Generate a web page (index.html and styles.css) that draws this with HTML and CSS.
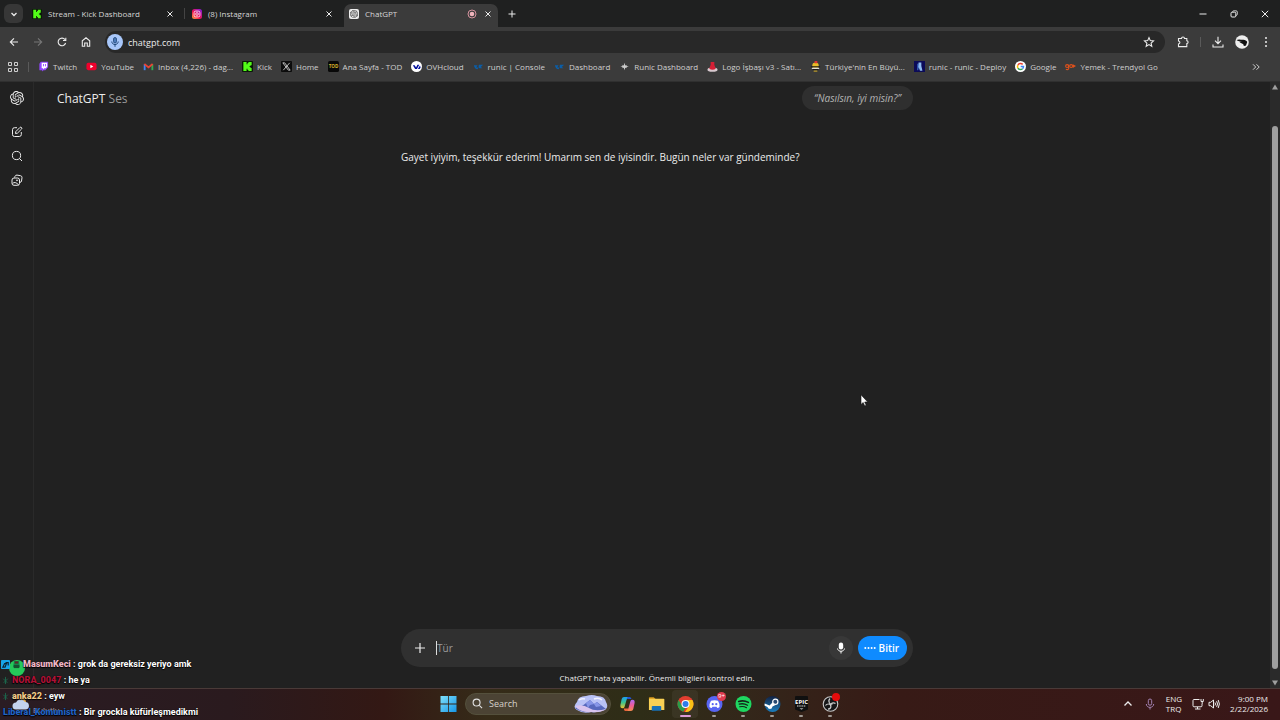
FILE: index.html
```html
<!DOCTYPE html>
<html lang="tr">
<head>
  <meta charset="UTF-8" />
  <meta name="viewport" content="width=device-width, initial-scale=1" />
  <title>ChatGPT</title>
  <link rel="stylesheet" href="styles.css">
</head>
<body>

<svg class="defs" aria-hidden="true">
  <symbol id="kick" viewBox="0 0 12 12"><rect width="12" height="12" rx="1" fill="#0b1a08"/><path d="M1.500 1h3.500v2.500h1V2.300h1V1h3.500v3.500H9.300v1h-1v1h1v1h1.200V11H7V9.700H6V8.500H5V11H1.500z" fill="#53fc18"/></symbol>
  <symbol id="close" viewBox="0 0 8 8"><path d="M1.500 1.500l5 5M6.500 1.500l-5 5" stroke="currentColor" stroke-width="1" fill="none"/></symbol>
  <symbol id="arrow-mark" viewBox="0 0 12 12"><path d="M1 4.500h4L3.500 7H6l-1 2C3 9 1.500 7.500 1 4.500zM6.500 4H11L8.500 6.500 10.500 8H7C6 7 5.800 5.500 6.500 4z" fill="#0b5ea8"/></symbol>
  <symbol id="openai" viewBox="0 0 24 24"><path fill="currentColor" d="M22.2819 9.8211a5.9847 5.9847 0 0 0-.5157-4.9108 6.0462 6.0462 0 0 0-6.5098-2.9A6.0651 6.0651 0 0 0 4.9807 4.1818a5.9847 5.9847 0 0 0-3.9977 2.9 6.0462 6.0462 0 0 0 .7427 7.0966 5.98 5.98 0 0 0 .511 4.9107 6.051 6.051 0 0 0 6.5146 2.9001A5.9847 5.9847 0 0 0 13.2599 24a6.0557 6.0557 0 0 0 5.7718-4.2058 5.9894 5.9894 0 0 0 3.9977-2.9001 6.0557 6.0557 0 0 0-.7475-7.0729zm-9.022 12.6081a4.4755 4.4755 0 0 1-2.8764-1.0408l.1419-.0804 4.7783-2.7582a.7948.7948 0 0 0 .3927-.6813v-6.7369l2.02 1.1686a.071.071 0 0 1 .038.052v5.5826a4.504 4.504 0 0 1-4.4945 4.4944zm-9.6607-4.1254a4.4708 4.4708 0 0 1-.5346-3.0137l.142.0852 4.783 2.7582a.7712.7712 0 0 0 .7806 0l5.8428-3.3685v2.3324a.0804.0804 0 0 1-.0332.0615L9.74 19.9502a4.4992 4.4992 0 0 1-6.1408-1.6464zM2.3408 7.8956a4.485 4.485 0 0 1 2.3655-1.9728V11.6a.7664.7664 0 0 0 .3879.6765l5.8144 3.3543-2.0201 1.1685a.0757.0757 0 0 1-.071 0l-4.8303-2.7865A4.504 4.504 0 0 1 2.3408 7.872zm16.5963 3.8558L13.1038 8.364 15.1192 7.2a.0757.0757 0 0 1 .071 0l4.8303 2.7913a4.4944 4.4944 0 0 1-.6765 8.1042v-5.6772a.79.79 0 0 0-.407-.667zm2.0107-3.0231l-.142-.0852-4.7735-2.7818a.7759.7759 0 0 0-.7854 0L9.409 9.2297V6.8974a.0662.0662 0 0 1 .0284-.0615l4.8303-2.7866a4.4992 4.4992 0 0 1 6.6802 4.66zM8.3065 12.863l-2.02-1.1638a.0804.0804 0 0 1-.038-.0567V6.0742a4.4992 4.4992 0 0 1 7.3757-3.4537l-.142.0805L8.704 5.459a.7948.7948 0 0 0-.3927.6813zm1.0976-2.3654l2.602-1.4998 2.6069 1.4998v2.9994l-2.5974 1.4997-2.6067-1.4997Z"/></symbol>
</svg>

<div class="tab-strip">
  <button class="tab-search" aria-label="Search tabs"><svg viewBox="0 0 12 12"><path d="M3.500 5L6 7.500 8.500 5" stroke="currentColor" stroke-width="1.300" fill="none"/></svg></button>
  <div class="tab">
    <svg class="favicon"><use href="#kick"/></svg>
    <span class="tab-title">Stream - Kick Dashboard</span>
    <button class="tab-close" aria-label="Close tab"><svg><use href="#close"/></svg></button>
  </div>
  <div class="tab tab-divided">
    <svg class="favicon" viewBox="0 0 12 12"><defs><linearGradient id="insta" x1="0" y1="1" x2="1" y2="0"><stop offset="0" stop-color="#ffb03d"/><stop offset=".4" stop-color="#f4134d"/><stop offset="1" stop-color="#7a1be8"/></linearGradient></defs><rect width="12" height="12" rx="3" fill="url(#insta)"/><rect x="2.500" y="2.500" width="7" height="7" rx="2" fill="none" stroke="#fff" stroke-width=".9"/><circle cx="6" cy="6" r="1.600" fill="none" stroke="#fff" stroke-width=".9"/></svg>
    <span class="tab-title">(8) Instagram</span>
    <button class="tab-close" aria-label="Close tab"><svg><use href="#close"/></svg></button>
  </div>
  <div class="tab active">
    <svg class="favicon gpt-favicon"><use href="#openai"/></svg>
    <span class="tab-title">ChatGPT</span>
    <svg class="recording" viewBox="0 0 10 10"><circle cx="5" cy="5" r="4" fill="none" stroke="#d5929e"/><circle cx="5" cy="5" r="2.300" fill="#f0b4bc"/></svg>
    <button class="tab-close" aria-label="Close tab"><svg><use href="#close"/></svg></button>
  </div>
  <button class="new-tab" aria-label="New tab"><svg viewBox="0 0 8 8"><path d="M4 .5v7M.5 4h7" stroke="currentColor"/></svg></button>
  <div class="window-buttons">
    <button aria-label="Minimize"><svg viewBox="0 0 10 10"><path d="M1.500 5h7" stroke="currentColor"/></svg></button>
    <button aria-label="Restore"><svg viewBox="0 0 10 10"><rect x="2" y="3.200" width="4.800" height="4.800" rx="1" fill="none" stroke="currentColor"/><path d="M3.700 3V2.600Q3.700 1.800 4.700 1.800H7Q8.300 1.800 8.300 3v2.400Q8.300 6.300 7 6.400" fill="none" stroke="currentColor" stroke-width=".8"/></svg></button>
    <button aria-label="Close"><svg viewBox="0 0 10 10"><path d="M1.800 1.800l6.400 6.400M8.200 1.800L1.800 8.200" stroke="currentColor"/></svg></button>
  </div>
</div>

<div class="toolbar">
  <div class="nav-buttons">
    <button aria-label="Back"><svg viewBox="0 0 12 12"><path d="M10 6H2.500M6 2.300L2.300 6 6 9.700" /></svg></button>
    <button class="dim" aria-label="Forward"><svg viewBox="0 0 12 12"><path d="M2 6h7.500M6 2.300L9.700 6 6 9.700" /></svg></button>
    <button aria-label="Reload"><svg viewBox="0 0 12 12"><path d="M9.600 7A3.800 3.800 0 1 1 9 3.600M9.800 1.700v2.800H7" /></svg></button>
    <button aria-label="Home"><svg viewBox="0 0 12 12"><path d="M2.300 10.300V4.800L6 1.800l3.700 3v5.500H7.300V7H4.700v3.300z" /></svg></button>
  </div>
  <div class="address-bar">
    <span class="mic-badge"><svg viewBox="0 0 12 12"><rect x="4.500" y="1.500" width="3" height="5.500" rx="1.500" fill="#4b79b8" stroke="#1f4678" stroke-width=".8"/><path d="M2.800 5.500c0 4 6.400 4 6.400 0M6 8.500v2.300" fill="none" stroke="#1f4678" stroke-width="1"/></svg></span>
    <input type="text" value="chatgpt.com" aria-label="Address">
    <button aria-label="Bookmark"><svg viewBox="0 0 12 12"><path d="M6 1.600l1.300 3 3.200.3-2.400 2.200.7 3.200L6 8.600l-2.800 1.700.7-3.200L1.500 4.900l3.200-.3z" /></svg></button>
  </div>
  <div class="tool-buttons">
    <button aria-label="Extensions"><svg viewBox="0 0 12 12"><path d="M1.500 2.500h3Q4.500 1 6 1t1.500 1.500h2.300v2.300q1.300.2 1.300 1.400T9.800 7.600v3H1.500V8q1.400-.3 1.400-1.500T1.500 5z" /></svg></button>
    <span class="tool-divider"></span>
    <button aria-label="Downloads"><svg viewBox="0 0 12 12"><path d="M6 .8v6.500M3 4.600l3 3 3-3M1 8.500v2.500h10V8.500" /></svg></button>
    <button aria-label="Profile"><svg class="avatar" viewBox="0 0 14 14"><circle cx="7" cy="7" r="6.800" fill="#eee"/><path d="M1.500 5C4 3.800 6 4.800 7.500 4.800 10 4.500 11.500 5.500 12.200 7L11 10.500c-1.300.8-3 .3-2.600-1.200L4.500 7.300 7 6.800C5 6.800 3 6.200 1.500 5z" fill="#111"/></svg></button>
    <button aria-label="Menu"><svg viewBox="0 0 12 12"><g fill="currentColor" stroke="none"><circle cx="6" cy="2" r="1"/><circle cx="6" cy="6" r="1"/><circle cx="6" cy="10" r="1"/></g></svg></button>
  </div>
</div>

<nav class="bookmarks">
  <button class="apps" aria-label="Apps"><svg viewBox="0 0 10 10"><path d="M.5.5h3v3h-3zM6.500.5h3v3h-3zM.5 6.500h3v3h-3zM6.500 6.500h3v3h-3z" fill="none" stroke="currentColor"/></svg></button>
  <div class="bookmark-list">
    <a href="#"><svg viewBox="0 0 12 12"><path d="M3 .8h8v6L8 10H6l-1.500 1.500V10H1.500V3z" fill="#9146ff"/><path d="M4 1.800h6v4.500L8.500 8H6.800L5.500 9.200V8H4z" fill="#fff"/><path d="M6 3.300v2.500M8.200 3.300v2.500" stroke="#9146ff"/></svg><span>Twitch</span></a>
    <a href="#"><svg viewBox="0 0 12 12"><rect x=".5" y="2" width="11" height="8" rx="2" fill="#f0002c"/><path d="M4.800 4v4L8 6z" fill="#fff"/></svg><span>YouTube</span></a>
    <a href="#"><svg viewBox="0 0 12 12"><path d="M1.800 10V3.500" stroke="#4285f4" stroke-width="2"/><path d="M10.200 10V3.500" stroke="#34a853" stroke-width="2"/><path d="M1.500 3.300L6 7l4.500-3.700" fill="none" stroke="#ea4335" stroke-width="2"/></svg><span>Inbox (4,226) - dag...</span></a>
    <a href="#"><svg><use href="#kick"/></svg><span>Kick</span></a>
    <a href="#"><svg viewBox="0 0 12 12"><rect width="12" height="12" rx="1" fill="#0c0c0c"/><path d="M2 2h2l6 8H8zM9.500 2L2.500 10" fill="none" stroke="#ddd" stroke-width=".9"/></svg><span>Home</span></a>
    <a href="#"><svg viewBox="0 0 12 12"><rect width="12" height="12" rx="2" fill="#080808"/><text x="6" y="8" font-size="5" font-weight="700" text-anchor="middle" fill="#d8b42d">TOD</text></svg><span>Ana Sayfa - TOD</span></a>
    <a href="#"><svg viewBox="0 0 12 12"><circle cx="6" cy="6" r="6" fill="#fff"/><path d="M2 4.500h2L5.500 7 7 4h2L6.500 8.800h-2zM8.500 7l1.300-2 .7 2-1 1.800h-2z" fill="#000e9c"/></svg><span>OVHcloud</span></a>
    <a href="#"><svg><use href="#arrow-mark"/></svg><span>runic | Console</span></a>
    <a href="#"><svg><use href="#arrow-mark"/></svg><span>Dashboard</span></a>
    <a href="#"><svg viewBox="0 0 12 12"><path d="M6 2l.8 2.800L9 4 7.800 5.400l3 .6-3 .7L9 8l-2.200-.7L6 10l-.8-2.700L3 8l1.200-1.300L1.500 6l2.700-.6L3 4l2.200.8z" fill="#ccc"/></svg><span>Runic Dashboard</span></a>
    <a href="#"><svg viewBox="0 0 12 12"><ellipse cx="6" cy="9.500" rx="5.500" ry="2.300" fill="#d8c9cf"/><path d="M4 1h4v3l1.500 4.500Q6 10.500 2.500 8.500L4 4z" fill="#d51f35"/></svg><span>Logo İşbaşı v3 - Satı...</span></a>
    <a href="#"><svg viewBox="0 0 12 12"><circle cx="6" cy="5" r="3.500" fill="#e8bd27"/><path d="M5 0h3v2.500H5z" fill="#d33"/><path d="M1 6.500h10M3 9.500h6" stroke="#181818" stroke-width="1.400"/><path d="M2 8h8" stroke="#eee" stroke-width="1.200"/><path d="M4 11h4" stroke="#e8bd27"/></svg><span>Türkiye'nin En Büyü...</span></a>
    <a href="#"><svg viewBox="0 0 12 12"><rect width="12" height="12" fill="#0c0b57"/><path d="M5 1.500h3v4l1.200 5H6.500L5 6.500l-1 4" fill="#8dbbf0"/><path d="M4.200 3v7" stroke="#3c79db"/></svg><span>runic - runic - Deploy</span></a>
    <a href="#"><svg viewBox="0 0 12 12"><circle cx="6" cy="6" r="6" fill="#fff"/><g fill="none" stroke-width="1.600"><path d="M8.400 3.700A3.300 3.300 0 0 0 3.200 4.400" stroke="#ea4335"/><path d="M3.200 4.400a3.300 3.300 0 0 0 0 3.300" stroke="#fbbc05"/><path d="M3.200 7.700a3.300 3.300 0 0 0 5 .8" stroke="#34a853"/><path d="M8.200 8.500A3.300 3.300 0 0 0 9.300 6H6.200" stroke="#4285f4"/></g></svg><span>Google</span></a>
    <a href="#"><svg viewBox="0 0 12 12"><g fill="none" stroke="#e0511b" stroke-width="1.200"><circle cx="2.300" cy="5.500" r="1.600"/><path d="M4 4v4.500q-1.500 1.500-3 .3"/><circle cx="6.700" cy="5.500" r="1.600"/></g><path d="M8.500 3.500L12 5.500 8.500 7.500z" fill="#e0511b"/></svg><span>Yemek - Trendyol Go</span></a>
  </div>
  <button class="more-bookmarks" aria-label="More bookmarks"><svg viewBox="0 0 10 10"><path d="M2 2.300L4.700 5 2 7.700M5.500 2.300L8.200 5 5.500 7.700" fill="none" stroke="currentColor"/></svg></button>
</nav>

<div class="page">
  <aside class="sidebar">
    <a href="#" class="home-link" aria-label="ChatGPT"><svg><use href="#openai"/></svg></a>
    <button aria-label="Yeni sohbet"><svg viewBox="0 0 12 12"><path d="M6 1.700H3.500Q1.500 1.700 1.500 3.700v4.800q0 2 2 2h4.800q2 0 2-2V6M4.500 7.500l.3-1.900L9 1.400q.8-.6 1.500.1t.1 1.500L6.400 7.200z"/></svg></button>
    <button aria-label="Ara"><svg viewBox="0 0 12 12"><circle cx="5.500" cy="5.500" r="4.100"/><path d="M8.500 8.500l2.500 2.500"/></svg></button>
    <button aria-label="Kitaplık"><svg viewBox="0 0 12 12"><rect x="1" y="4" width="7.500" height="7.300" rx="2"/><path d="M3.500 3.500L4 2.300Q4.600.9 6 1.100l3.500.6q1.700.4 1.500 2L10.500 7q-.3 1.300-1.500 1.400M1.500 9.500Q4 7 7.500 10.800"/><circle cx="6" cy="6.300" r=".5"/></svg></button>
  </aside>

  <main class="chat">
    <h1 class="model-name">ChatGPT <span>Ses</span></h1>
    <div class="thread">
      <p class="user-message">“Nasılsın, iyi misin?”</p>
      <p class="reply">Gayet iyiyim, teşekkür ederim! Umarım sen de iyisindir. Bugün neler var gündeminde?</p>
    </div>
    <form class="composer">
      <button type="button" class="attach" aria-label="Ekle"><svg viewBox="0 0 12 12"><path d="M6 1v10M1 6h10" stroke="currentColor" stroke-width="1.200"/></svg></button>
      <input type="text" placeholder="Tür" aria-label="Mesaj">
      <button type="button" class="mic" aria-label="Mikrofon"><svg viewBox="0 0 12 12"><rect x="3.800" y=".5" width="4.400" height="7" rx="2.200" fill="#fff"/><path d="M2.500 6.500c.5 3.700 6.500 3.700 7 0M6 9.300v2.200" fill="none" stroke="#fff"/></svg></button>
      <button type="button" class="end-voice"><svg viewBox="0 0 12 4"><g fill="#fff"><circle cx="1.300" cy="2" r="1"/><circle cx="4.500" cy="2" r="1"/><circle cx="7.600" cy="2" r="1"/><circle cx="10.700" cy="2" r="1"/></g></svg>Bitir</button>
    </form>
    <p class="disclaimer">ChatGPT hata yapabilir. Önemli bilgileri kontrol edin.</p>
  </main>

  <div class="scrollbar">
    <svg viewBox="0 0 8 6"><path d="M4 .5L7 5.500H1z" fill="#9f9f9f"/></svg>
    <div class="scroll-thumb"></div>
    <svg viewBox="0 0 8 6"><path d="M4 5.500L7 .5H1z" fill="#9f9f9f"/></svg>
  </div>

  <span class="user-avatar"></span>
  <svg class="cursor" viewBox="0 0 8 13"><path d="M1 .8v9.700l2.200-2 1.500 3.500 1.500-.7-1.500-3.300h3z" fill="#fff" stroke="#111" stroke-width=".6"/></svg>
</div>

<footer class="taskbar">
  <div class="weather">
    <svg viewBox="0 0 18 12"><circle cx="11" cy="4" r="3" fill="#e8b04b"/><path d="M4 11.500a3.500 3.500 0 0 1 0-7A5 5 0 0 1 13 4a3.800 3.800 0 0 1 1 7.500z" fill="#c3d2ef"/></svg>
    <span>Bulutlu</span>
  </div>
  <div class="task-icons">
    <button class="task start" aria-label="Start"><svg viewBox="0 0 16 16"><defs><linearGradient id="win" x1="0" y1="0" x2="1" y2="1"><stop offset="0" stop-color="#7fe0fb"/><stop offset="1" stop-color="#1695e6"/></linearGradient></defs><path d="M0 0h7.600v7.600H0zM8.400 0H16v7.600H8.400zM0 8.400h7.600V16H0zM8.400 8.400H16V16H8.400z" fill="url(#win)"/></svg></button>
    <label class="search">
      <svg class="lens" viewBox="0 0 12 12"><circle cx="5" cy="5" r="3.800"/><path d="M8 8l3 3"/></svg>
      <input type="text" placeholder="Search" aria-label="Search">
      <svg class="art" viewBox="0 0 34 18"><path d="M3 7Q4 1 12 1q6-2 11 0 8 0 9 6 3 5-1 8-8 3-14 2-8 2-14-2-5-3 0-8z" fill="#b9c2f6"/><path d="M1 13Q8 12 12 8l4-3 4 4 3-2 9 7q-7 4-15 3-10 1-16-4z" fill="#5768bd"/><path d="M12 8l4-3 4 4-4 1-2 3zM20 9l3-2 4 4-5 1z" fill="#8796e8"/><path d="M1 11q8-2 14 2t17 1q-6 4-14 3-12 1-17-6z" fill="#d9c4ee"/><path d="M5 5q3-2 6-1M20 4q5-2 8 1" stroke="#f2f3ff" stroke-width="1.500" fill="none"/></svg>
    </label>
    <button class="task" aria-label="Copilot"><svg viewBox="0 0 16 16"><defs><linearGradient id="cp1" x1="0" y1="0" x2="0" y2="1"><stop offset="0" stop-color="#199ff2"/><stop offset=".5" stop-color="#3fc58b"/><stop offset="1" stop-color="#f2c42f"/></linearGradient><linearGradient id="cp2" x1="0" y1="0" x2="0" y2="1"><stop offset="0" stop-color="#a86bf5"/><stop offset=".5" stop-color="#ed5b9a"/><stop offset="1" stop-color="#f38a4b"/></linearGradient></defs><path d="M4.500 1H9Q7.500 2 7 4L5 11q-.4 1.300-2 1.300Q.5 12.300.9 9l1.300-6Q2.700 1 4.500 1z" fill="url(#cp1)"/><path d="M9 1h1q1.500 0 2 2H7.200Q7.700 1 9 1z" fill="#2254d6"/><path d="M11.500 15H7q1.500-1 2-3l2-7q.4-1.300 2-1.300 2.500 0 2.100 3.300l-1.300 6q-.5 2-2.300 2z" fill="url(#cp2)"/><path d="M7 15H6q-1.500 0-1.800-2.500H9Q8.500 15 7 15z" fill="#f0673c"/></svg></button>
    <button class="task" aria-label="File Explorer"><svg viewBox="0 0 18 16"><path d="M1 1.500Q1 .8 1.800.8H6l2 2H1z" fill="#d99a1d"/><path d="M1 2.500h15.500q.8 0 .8.800v11H1z" fill="#f9d155"/><path d="M4 15.200V11q0-1 1-1h8q1 0 1 1v4.200z" fill="#1972b8"/></svg></button>
    <button class="task running focused" aria-label="Chrome"><svg viewBox="0 0 16 16"><circle cx="8" cy="8" r="8" fill="#e33e30"/><path d="M1.100 4L5 10.500l3 1.500-2.200 3.700A8 8 0 0 1 1.100 4z" fill="#2a9d49"/><path d="M8 4h6.900A8 8 0 0 1 7.500 16L11.500 10z" fill="#fbc116"/><circle cx="8" cy="8" r="4" fill="#fff"/><circle cx="8" cy="8" r="3" fill="#2e7de9"/></svg></button>
    <button class="task running" aria-label="Discord"><svg viewBox="0 0 16 16"><circle cx="8" cy="8" r="8" fill="#5865f2"/><path d="M4.500 4.800Q8 3.500 11.500 4.800 13.500 8 13 11q-1 1-2.200 1l-.8-1.300H6L5.200 12Q4 12 3 11 2.500 8 4.500 4.800z" fill="#fff"/><circle cx="6.200" cy="8.200" r="1.100" fill="#5865f2"/><circle cx="9.800" cy="8.200" r="1.100" fill="#5865f2"/></svg><span class="badge">9+</span></button>
    <button class="task running" aria-label="Spotify"><svg viewBox="0 0 16 16"><circle cx="8" cy="8" r="8" fill="#1ed760"/><g fill="none" stroke="#14251a" stroke-linecap="round"><path d="M3.200 5.400q5-1.500 9.700 1" stroke-width="1.600"/><path d="M3.700 8.200q4.300-1.200 8.300 1" stroke-width="1.300"/><path d="M4.200 10.800q3.800-1 6.800.9" stroke-width="1.100"/></g></svg></button>
    <button class="task running" aria-label="Steam"><svg viewBox="0 0 16 16"><defs><linearGradient id="steam" x1="0" y1="0" x2="0" y2="1"><stop offset="0" stop-color="#13203f"/><stop offset="1" stop-color="#1a7fc0"/></linearGradient></defs><circle cx="8" cy="8" r="8" fill="url(#steam)"/><path d="M.2 7.500L5 9.500 8 6.500l3 2.500-3 1.500q-.5 2.500-2.500 2.500T3 11L0 9.500z" fill="#fff"/><circle cx="10.800" cy="5.800" r="2.600" fill="#274a72" stroke="#fff" stroke-width="1.200"/></svg></button>
    <button class="task running" aria-label="Epic Games"><svg viewBox="0 0 16 16"><path d="M1.500 1Q1.500 0 2.500 0h11q1 0 1 1v12.500L8 16l-6.500-2.500z" fill="#101010"/><text x="8" y="7.500" font-size="6" font-weight="700" text-anchor="middle" fill="#fff">EPIC</text><path d="M3.500 10h9" stroke="#ddd" stroke-width="1.200" stroke-dasharray="1.500 .7"/><path d="M6 12.500h4l-2 1z" fill="#fff"/></svg></button>
    <button class="task running" aria-label="OBS"><svg viewBox="0 0 16 16"><circle cx="8" cy="8" r="7.300" fill="#161618" stroke="#c9c9c9" stroke-width="1.100"/><path d="M7.500 2.500q-2 2-.5 4.500 1 1.500 3 1M13 7.500q-2.500-1.500-4.500.5-1 1.500 0 3M5.500 13.200q3-.3 3-3.200-.5-2-2.500-2-2 0-3 1.500" fill="none" stroke="#c9c9c9" stroke-width="1.200"/></svg><span class="rec-dot"></span></button>
  </div>
  <div class="tray">
    <button aria-label="Hidden icons"><svg viewBox="0 0 12 12"><path d="M2.500 7.500L6 4l3.500 3.500" stroke-width="1.300"/></svg></button>
    <button class="tray-mic" aria-label="Microphone"><svg viewBox="0 0 12 12"><rect x="4.300" y="1" width="3.400" height="6.200" rx="1.700"/><path d="M2.300 6c0 4.500 7.400 4.500 7.400 0M6 9.500v2"/></svg></button>
    <span class="language">ENG<br>TRQ</span>
    <button class="status" aria-label="Network and volume">
      <svg viewBox="0 0 12 12"><path d="M7.500 1.500H2Q1 1.500 1 2.500v5.300q0 1 1 1h7q1 0 1-1V6M3 11h5.500M5.500 9v2M9 1v2.500h2.300V1M10.200 3.500V6"/></svg>
      <svg viewBox="0 0 12 12"><path d="M1 4.300h1.700L5.500 2v8L2.700 7.700H1zM7 4.500q1 1.500 0 3M8.600 3.200q1.900 2.800 0 5.600M10.200 2q2.400 4 0 8"/></svg>
    </button>
    <time class="clock">9:00 PM<br>2/22/2026</time>
  </div>
</footer>

<!-- stream chat overlay -->
<ul class="stream-chat">
  <li><svg viewBox="0 0 10 10"><rect width="10" height="10" rx="1" fill="#18a5e8"/><path d="M2 8l2-4h2L4.500 8zM5 3h3v3" fill="none" stroke="#0c2434" stroke-width="1.300"/></svg><svg viewBox="0 0 10 10"><path d="M2 1h6v2l1 5H1l1-5z" fill="#15884c"/><path d="M3 1.500h4V4H3z" fill="#5b2a2b"/><path d="M2 5.500h6V9H2z" fill="#14522e"/></svg><b class="pink">MasumKeci</b> : grok da gereksiz yeriyo amk</li>
  <li><svg viewBox="0 0 10 10"><path d="M5 1v8M2.500 3L7 7.500M7.500 3L3 7.500" stroke="#1c6a4e"/></svg><b class="red">NORA_0047</b> : he ya</li>
  <li><svg viewBox="0 0 10 10"><path d="M5 1v8M2.500 3L7 7.500M7.500 3L3 7.500" stroke="#1c6a4e"/></svg><b class="sand">anka22</b> : eyw</li>
  <li><b class="blue">Liberal_Komunistt</b> : Bir grockla küfürleşmedikmi</li>
</ul>

</body>
</html>
```
FILE: styles.css
```css
* {
  margin: 0;
  padding: 0;
  box-sizing: border-box;
}

body {
  display: flex;
  flex-direction: column;
  height: 100vh;
  overflow: hidden;
  font-family: "Segoe UI", "Open Sans", "Noto Sans", sans-serif;
  font-size: 8px;
  color: #ececec;
  background-color: #212121;
}

button, input {
  font: inherit;
  color: inherit;
  background: none;
  border: none;
  outline: none;
}

button {
  display: flex;
  align-items: center;
  justify-content: center;
}

a {
  color: inherit;
  text-decoration: none;
}

svg {
  display: block;
  flex-shrink: 0;
}

.defs {
  position: absolute;
  width: 0;
  height: 0;
}

/* tabs */
.tab-strip {
  display: flex;
  height: 27px;
  padding: 4px 5px 0 4px;
  background-color: #1f2020;
}

.tab-search {
  width: 19px;
  height: 19px;
  margin-right: 2px;
  border-radius: 6px;
  background-color: #373737;
}

.tab-search svg {
  width: 12px;
  height: 12px;
}

.tab {
  display: flex;
  align-items: center;
  width: 159px;
  height: 19px;
  padding: 0 10px 0 7px;
}

.tab-divided {
  border-left: 1px solid #444;
  height: 11px;
  margin-top: 4px;
}

.tab.active {
  width: 154px;
  height: 23px;
  padding: 0 6px 4px 5px;
  background-color: #3b3b3b;
  border-radius: 7px 7px 0 0;
  margin-left: 1px;
}

.favicon {
  width: 10px;
  height: 10px;
  margin-right: 6px;
}

.gpt-favicon {
  padding: 1px;
  border-radius: 2px;
  background-color: #eee;
  color: #333;
}

.tab-title {
  flex: 1;
  color: #d6d6d6;
}

.recording {
  width: 10px;
  height: 10px;
  margin-right: 7px;
}

.tab-close svg,
.new-tab svg {
  width: 8px;
  height: 8px;
}

.new-tab {
  width: 28px;
  height: 19px;
}

.window-buttons {
  display: flex;
  gap: 11px;
  height: 19px;
  margin-left: auto;
}

.window-buttons button {
  width: 20px;
}

.window-buttons svg {
  width: 10px;
  height: 10px;
}

/* toolbar */
.toolbar {
  display: flex;
  align-items: center;
  height: 30px;
  padding: 0 8px;
  background-color: #3b3b3b;
}

.toolbar svg {
  width: 12px;
  height: 12px;
  fill: none;
  stroke: currentColor;
  stroke-width: 1.1;
}

.nav-buttons {
  display: flex;
  gap: 12px;
  margin-right: 13px;
}

.dim {
  color: #777;
}

.address-bar {
  flex: 1;
  display: flex;
  align-items: center;
  height: 22px;
  padding: 0 10px 0 2px;
  border-radius: 11px;
  background-color: #282828;
}

.mic-badge {
  padding: 2px;
  border-radius: 50%;
  background-color: #a8c7fa;
}

.address-bar input {
  flex: 1;
  padding-left: 5px;
  font-size: 9px;
}

.tool-buttons {
  display: flex;
  align-items: center;
  gap: 11px;
  margin-left: 12px;
}

.tool-divider {
  width: 1px;
  height: 10px;
  background-color: #5a5a5a;
}

.tool-buttons .avatar {
  width: 14px;
  height: 14px;
  stroke: none;
}

/* bookmarks */
.bookmarks {
  display: flex;
  align-items: center;
  height: 24px;
  padding: 0 19px 5px 8px;
  background-color: #3b3b3b;
  color: #cfcfcf;
}

.apps {
  padding-right: 10px;
  border-right: 1px solid #5a5a5a;
}

.apps svg,
.more-bookmarks svg {
  width: 10px;
  height: 10px;
}

.bookmark-list {
  flex: 1;
  display: flex;
  gap: 9px;
  padding-left: 9px;
}

.bookmark-list a {
  display: flex;
  align-items: center;
  gap: 4px;
  line-height: 10px;
  white-space: nowrap;
}

.bookmark-list svg {
  width: 11px;
  height: 11px;
}

/* chat page */
.page {
  position: relative;
  flex: 1;
  display: flex;
  border-top: 1px solid #303030;
}

.sidebar {
  display: flex;
  flex-direction: column;
  align-items: center;
  gap: 12px;
  width: 34px;
  padding-top: 9px;
  border-right: 1px solid #2a2a2a;
}

.sidebar svg {
  width: 12px;
  height: 12px;
  fill: none;
  stroke: currentColor;
  stroke-width: 1;
}

.sidebar .home-link {
  margin-bottom: 9px;
}

.home-link svg {
  width: 14px;
  height: 14px;
  stroke: none;
}

.chat {
  flex: 1;
  display: grid;
  grid-template-columns: 1fr;
  grid-template-rows: 1fr auto auto;
  justify-items: center;
}

.model-name {
  grid-area: 1 / 1;
  justify-self: start;
  padding: 9px 0 0 23px;
  font-size: 12px;
  font-weight: 400;
  line-height: 16px;
}

.model-name span {
  color: #9b9b9b;
}

.thread {
  grid-area: 1 / 1;
  display: flex;
  flex-direction: column;
  width: 100%;
  max-width: 512px;
  padding-top: 4px;
}

.user-message {
  align-self: flex-end;
  margin-bottom: 38px;
  padding: 4px 12px;
  border-radius: 12px;
  background-color: #2f2f2f;
  color: #b4b4b4;
  font-size: 10px;
  font-style: italic;
  line-height: 16px;
}

.reply {
  font-size: 10px;
  line-height: 18px;
}

.composer {
  display: flex;
  align-items: center;
  width: 100%;
  max-width: 512px;
  height: 38px;
  padding: 0 6px 0 13px;
  border-radius: 19px;
  background-color: #303030;
  font-size: 10px;
}

.attach svg {
  width: 12px;
  height: 12px;
}

.composer input {
  flex: 1;
  height: 14px;
  margin-left: 10px;
  border-left: 1px solid #ddd;
}

.composer input::placeholder {
  color: #9b9b9b;
}

.mic {
  width: 24px;
  height: 24px;
  margin-right: 5px;
  border-radius: 50%;
  background-color: #383838;
}

.mic svg {
  width: 12px;
  height: 12px;
}

.end-voice {
  gap: 3px;
  height: 24px;
  padding: 0 8px 0 6px;
  border-radius: 12px;
  background-color: #0f8bff;
  color: #fff;
  font-weight: 600;
}

.end-voice svg {
  width: 12px;
  height: 4px;
}

.disclaimer {
  padding: 5px 0 4px;
  line-height: 12px;
}

.scrollbar {
  position: absolute;
  top: 0;
  right: 0;
  bottom: 0;
  display: flex;
  flex-direction: column;
  align-items: center;
  width: 10px;
  padding: 2px 0;
  background-color: #2a2a2a;
}

.scrollbar svg {
  width: 8px;
  height: 6px;
}

.scroll-thumb {
  flex: 1;
  width: 6px;
  margin: 36px 0 11px;
  border-radius: 3px;
  background-color: #9f9f9f;
}

.user-avatar {
  position: absolute;
  left: 9px;
  bottom: 12px;
  width: 16px;
  height: 16px;
  border-radius: 50%;
  background-color: #25c95a;
}

.cursor {
  position: absolute;
  left: 860px;
  top: 312px;
  width: 8px;
  height: 13px;
}

/* taskbar */
.taskbar {
  display: grid;
  grid-template-columns: 1fr auto 1fr;
  align-items: center;
  height: 32px;
  padding-bottom: 2px;
  border-top: 1px solid #4a3a38;
  background: linear-gradient(90deg, #2a1c23 0%, #2a1a1e 18%, #331814 30%, #352b18 38%, #2e2d17 50%, #33271a 58%, #371a16 70%, #391718 100%);
}

.weather {
  display: flex;
  align-items: center;
  gap: 3px;
  padding-left: 12px;
  color: #b5aeb2;
}

.weather svg {
  width: 18px;
  height: 12px;
}

.weather span {
  padding-top: 12px;
}

.task-icons {
  display: flex;
  align-items: center;
  gap: 3px;
}

.task {
  position: relative;
  width: 26px;
  height: 28px;
  border-radius: 4px;
}

.task svg {
  width: 17px;
  height: 16px;
}

.start {
  width: 22px;
}

.running::after {
  content: "";
  position: absolute;
  bottom: 1px;
  width: 4px;
  height: 2px;
  border-radius: 1px;
  background-color: #a09a94;
}

.focused {
  background-color: rgba(255, 255, 255, 0.05);
}

.focused::after {
  width: 11px;
  background-color: #dc9bd6;
}

.badge {
  position: absolute;
  top: 2px;
  right: 1px;
  width: 9px;
  height: 9px;
  border-radius: 50%;
  background-color: #dd3b50;
  color: #fff;
  font-size: 6px;
  line-height: 9px;
}

.rec-dot {
  position: absolute;
  top: 3px;
  right: 3px;
  width: 8px;
  height: 8px;
  border-radius: 50%;
  background-color: #e60c0c;
}

.search {
  display: flex;
  align-items: center;
  width: 146px;
  height: 22px;
  margin-left: 3px;
  padding: 0 2px 0 6px;
  border: 1px solid #54503c;
  border-radius: 11px;
  background-color: #4b4334;
  font-size: 9px;
}

.search input {
  flex: 1;
  min-width: 0;
  padding-left: 6px;
}

.search input::placeholder {
  color: #d6d2cb;
}

.search .lens {
  width: 11px;
  height: 11px;
  fill: none;
  stroke: #e3e3e3;
  stroke-width: 1.2;
}

.search .art {
  width: 34px;
  height: 18px;
}

.tray {
  display: flex;
  align-items: center;
  justify-content: flex-end;
  gap: 10px;
  padding-right: 12px;
  line-height: 10px;
}

.tray svg {
  width: 12px;
  height: 12px;
  fill: none;
  stroke: currentColor;
}

.tray .tray-mic {
  color: #a583b4;
}

.status {
  gap: 4px;
}

.clock {
  text-align: right;
}

/* stream chat overlay */
.stream-chat {
  position: absolute;
  left: 1px;
  bottom: 0;
  list-style: none;
  font-family: Roboto, sans-serif;
  font-size: 9px;
  font-weight: 700;
  line-height: 16px;
  color: #fff;
  text-shadow: 0 0 1px #000, 0 1px 1px #000;
}

.stream-chat li {
  display: flex;
  align-items: center;
  white-space: pre;
}

.stream-chat li:last-child {
  padding-left: 2px;
}

.stream-chat svg {
  width: 9px;
  height: 9px;
  margin-right: 2px;
}

.pink {
  color: #efb6c4;
}

.red {
  color: #ae1237;
}

.sand {
  color: #efc988;
}

.blue {
  color: #2263c4;
}
```
